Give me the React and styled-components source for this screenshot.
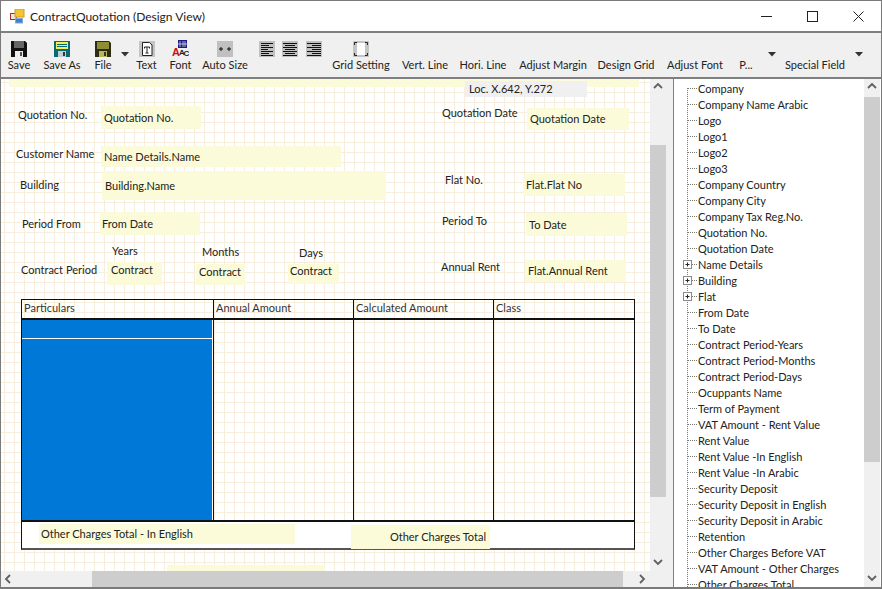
import React from 'react';
import styled, { createGlobalStyle } from 'styled-components';

const Global = createGlobalStyle`
  html, body { margin: 0; padding: 0; background: #fff; }
  body { font-family: Lato, "Open Sans", "Liberation Sans", sans-serif; font-size: 11px; color: #111; overflow: hidden; }
  * { box-sizing: border-box; }
`;

const Window = styled.div`
  width: 882px; height: 589px; display: flex; flex-direction: column;
  border: 1px solid #7a7a7a; border-bottom-width: 2px; overflow: hidden; background: #f0f0f0;
`;
const TitleBar = styled.div`
  height: 30px; flex: none; background: #fff; display: flex; align-items: center; padding-left: 9px;
`;
const Title = styled.span`
  margin-left: 5px; font-size: 12px; color: #222; white-space: nowrap;
`;
const Controls = styled.div`
  margin-left: auto; display: flex; align-items: center; height: 100%;
`;
const ControlBtn = styled.div`
  width: 46px; height: 30px; display: flex; align-items: center; justify-content: center;
`;
const Toolbar = styled.div`
  height: 48px; flex: none; background: #f0f0f0; display: flex; align-items: stretch; padding-left: 3px;
  border-top: 2px solid #7f7f7f; border-bottom: 2px solid #7f7f7f;
`;
const Tool = styled.div`
  width: ${p => p.$w}px; flex: none; display: flex; flex-direction: column; align-items: center;
  padding-top: ${p => p.$drop ? 13 : 7}px; white-space: nowrap;
`;
const ToolIcon = styled.div`
  height: 17px; display: flex; align-items: center; justify-content: center;
`;
const ToolLabel = styled.div`
  font-size: 11px; line-height: 16px; color: #222;
`;
const Body = styled.div`
  flex: 1; display: flex; min-height: 0;
`;
const Design = styled.div`
  width: 665px; flex: none; display: grid; grid-template-columns: 649px 16px; grid-template-rows: 492px 16px;
`;
const Canvas = styled.div`
  position: relative; overflow: hidden; background-color: #fff;
  background-image:
    linear-gradient(to right, #f8eedd 1px, transparent 1px),
    linear-gradient(to bottom, #f8eedd 1px, transparent 1px);
  background-size: 10px 10px;
  background-position: 3px 3px;
`;
const Strip = styled.div`
  position: absolute; background: #fbfbd9;
  left: ${p => p.$x}px; top: ${p => p.$y}px; width: ${p => p.$w}px; height: ${p => p.$h}px;
`;
const Field = styled.div`
  position: absolute; display: flex; align-items: center; background: #fbfbd9; color: #222; white-space: nowrap;
  justify-content: ${p => p.$align || 'flex-start'};
  padding: 0 ${p => p.$pr ?? 3}px ${p => p.$pb ?? 1}px ${p => p.$pl ?? 3}px;
  left: ${p => p.$x}px; top: ${p => p.$y}px; width: ${p => p.$w}px; height: ${p => p.$h}px;
`;
const Loc = styled(Field)`
  background: #f0f0f0;
`;
const Label = styled.div`
  position: absolute; white-space: nowrap; color: #222; line-height: 16px;
  left: ${p => p.$x}px; top: ${p => p.$y}px;
`;
const Table = styled.div`
  position: absolute; left: 20px; top: 220px; width: 614px; display: flex; flex-direction: column;
`;
const HeaderRow = styled.div`
  display: grid; grid-template-columns: 191px 140px 140px 141px; height: 21px;
  border: 1px solid #111; border-bottom-width: 2px;
`;
const HeaderCell = styled.div`
  padding-left: 2px; line-height: 16px; color: #333; border-left: ${p => p.$first ? 'none' : '1px solid #111'};
`;
const BodyRow = styled.div`
  display: grid; grid-template-columns: 191px 140px 140px 141px; height: 200px;
  border-left: 1px solid #111; border-right: 1px solid #111;
`;
const BlueCell = styled.div`
  background: #0078d7; border-right: 1px solid #fff;
`;
const Selected = styled.div`
  height: 19px; border-bottom: 1px solid #fff;
`;
const BodyCell = styled.div`
  border-left: 1px solid #111;
`;
const FooterRow = styled.div`
  height: 30px; background: #fff; border: 1px solid #111; border-top: 2px solid #111; border-bottom: 2px solid #555;
`;
const VBar = styled.div`
  background: #f0f0f0; display: flex; flex-direction: column; align-items: stretch;
`;
const HBar = styled.div`
  background: #f0f0f0; display: flex; align-items: stretch;
`;
const Arrow = styled.div`
  flex: none; width: ${p => p.$w || 'auto'}; height: ${p => p.$h || 'auto'};
  display: flex; align-items: center; justify-content: center;
`;
const Thumb = styled.div`
  background: #cdcdcd; flex: none;
  ${p => p.$vertical
    ? `height: ${p.$len}px; margin-top: ${p.$off}px;`
    : `width: ${p.$len}px; margin-left: ${p.$off}px;`}
`;
const Spring = styled.div` flex: 1; `;
const Corner = styled.div` background: #f0f0f0; `;
const Splitter = styled.div`
  width: 8px; flex: none; background: #f0f0f0; border-right: 1px solid #7f7f7f;
`;
const Tree = styled.div`
  flex: 1; display: flex; background: #fff; min-width: 0; height: 508px; overflow: hidden;
`;
const TreeList = styled.div`
  flex: 1; padding-top: 1px; overflow: hidden;
`;
const TreeRow = styled.div`
  height: 16px; display: flex; align-items: center; white-space: nowrap; color: #222; flex: none;
`;
const TreeVBar = styled(VBar)`
  width: 16px; flex: none; margin-right: 1px;
`;

const Save = () => (
  <svg width="16" height="16" viewBox="0 0 16 16">
    <path d="M0 0h14l2 2v14H0z" fill="#111" />
    <rect x="3" y="0" width="10" height="7" fill="#666" />
    <rect x="4" y="10" width="8" height="6" fill="#eee" />
    <rect x="9" y="11" width="2" height="4" fill="#555" />
  </svg>
);
const SaveAs = () => (
  <svg width="16" height="16" viewBox="0 0 16 16">
    <rect width="16" height="16" fill="#0a6a72" />
    <rect x="2" y="1" width="12" height="7" fill="#f3ee58" />
    <rect x="3" y="3" width="10" height="1" fill="#0a6a72" />
    <rect x="3" y="5" width="10" height="1" fill="#0a6a72" />
    <rect x="4" y="10" width="8" height="6" fill="#c4ccd4" />
    <rect x="9" y="11" width="2" height="4" fill="#334" />
  </svg>
);
const FileIco = () => (
  <svg width="16" height="16" viewBox="0 0 16 16">
    <path d="M0 0h14l2 2v14H0z" fill="#2c2c12" />
    <rect x="2" y="1" width="12" height="7" fill="#8d8d33" />
    <rect x="4" y="10" width="8" height="6" fill="#b8b85a" />
    <rect x="9" y="11" width="2" height="4" fill="#333" />
  </svg>
);
const TextIco = () => (
  <svg width="16" height="16" viewBox="0 0 16 16">
    <rect width="16" height="16" fill="#c4c4c4" />
    <path d="M3.5 1.5h7l2.500 2.500v10.500h-9.500z" fill="#fff" stroke="#222" />
    <path d="M5.500 7.500V6h5v1.500M8 6v6M6.500 12h3" fill="none" stroke="#222" />
  </svg>
);
const FontIco = () => (
  <svg width="17" height="17" viewBox="0 0 17 17" fontFamily="Liberation Sans, sans-serif" fontWeight="700">
    <rect x="6" y="0" width="9" height="8" fill="#1a1a80" />
    <path d="M8 1v6M11 1v6M13 1v6M6 4h9" stroke="#f0f0f0" strokeWidth="0.700" />
    <text x="0" y="16" fontSize="11" fill="#cc1111">A</text>
    <text x="7" y="15" fontSize="8" fill="#222">A</text>
    <text x="11.500" y="16" fontSize="8" fill="#222">C</text>
  </svg>
);
const AutoIco = () => (
  <svg width="16" height="16" viewBox="0 0 16 16">
    <rect width="16" height="16" fill="#c0c0c0" />
    <path d="M2 8h4M4 6v4M10 8h4M12 6v4" stroke="#111" />
  </svg>
);
const AlignIco = ({ kind }) => {
  const lines = kind === 'left'
    ? [[2, 14], [2, 10], [2, 14], [2, 9], [2, 14], [2, 10], [2, 14]]
    : kind === 'center'
      ? [[1, 15], [3, 13], [1, 15], [3, 13], [1, 15], [3, 13], [1, 15]]
      : [[1, 15], [6, 15], [1, 15], [6, 15], [1, 15], [6, 15], [1, 15]];
  return (
    <svg width="16" height="16" viewBox="0 0 16 16">
      <rect width="16" height="16" fill="#c0c0c0" />
      {lines.map(([a, b], i) => <path key={i} d={`M${a} ${2.5 + i * 2}H${b}`} stroke="#111" />)}
    </svg>
  );
};
const GridIco = () => (
  <svg width="16" height="16" viewBox="0 0 16 16">
    <rect width="16" height="16" fill="#c4c4c4" />
    <rect x="4" y="2" width="8" height="12" fill="#fff" />
    <path d="M1.500 4V1.500H4M12 1.500h2.500V4M1.500 12v2.500H4M12 14.500h2.500V12" fill="none" stroke="#222" />
  </svg>
);
const Drop = () => (
  <svg width="8" height="5" viewBox="0 0 8 5"><path d="M0 0h8L4 4.500z" fill="#333" /></svg>
);
const Chevron = ({ dir }) => {
  const d = { up: 'M1 6l4-4 4 4', down: 'M1 2l4 4 4-4', left: 'M6 1L2 5l4 4', right: 'M3 1l4 4-4 4' }[dir];
  return <svg width="10" height="10" viewBox="0 0 10 10"><path d={d} fill="none" stroke="#606060" strokeWidth="1.800" /></svg>;
};
const Connector = ({ plus }) => (
  <svg width="24" height="16" viewBox="0 0 24 16" style={{ flex: 'none' }}>
    <path d={`M13.5 ${plus === 'first' ? 8 : 0}V16`} stroke="#777" strokeDasharray="1 1" />
    <path d="M14 8.500H23" stroke="#777" strokeDasharray="1 1" />
    {plus === true && (
      <>
        <rect x="9.500" y="4.500" width="8" height="8" fill="#fff" stroke="#8a8a8a" />
        <path d="M11.500 8.500h4M13.500 6.500v4" stroke="#222" />
      </>
    )}
  </svg>
);

const tools = [
  { w: 30, label: 'Save', icon: <Save /> },
  { w: 56, label: 'Save As', icon: <SaveAs /> },
  { w: 26, label: 'File', icon: <FileIco /> },
  { w: 17, drop: true },
  { w: 27, label: 'Text', icon: <TextIco /> },
  { w: 41, label: 'Font', icon: <FontIco /> },
  { w: 48, label: 'Auto Size', icon: <AutoIco /> },
  { w: 6 },
  { w: 23, icon: <AlignIco kind="left" /> },
  { w: 23, icon: <AlignIco kind="center" /> },
  { w: 25, icon: <AlignIco kind="right" /> },
  { w: 70, label: 'Grid Setting', icon: <GridIco /> },
  { w: 58, label: 'Vert. Line' },
  { w: 58, label: 'Hori. Line' },
  { w: 82, label: 'Adjust Margin' },
  { w: 64, label: 'Design Grid' },
  { w: 74, label: 'Adjust Font' },
  { w: 28, label: 'P...' },
  { w: 24, drop: true },
  { w: 62, label: 'Special Field' },
  { w: 26, drop: true },
];

const labels = [
  ['Quotation No.', 17, 28], ['Quotation Date', 441, 26], ['Customer Name', 15, 67], ['Building', 19, 98],
  ['Flat No.', 444, 93], ['Period From', 21, 137], ['Period To', 441, 134], ['Years', 111, 164],
  ['Months', 201, 165], ['Days', 298, 166], ['Contract Period', 20, 183], ['Annual Rent', 440, 180],
];

const fields = [
  { t: 'Quotation No.', x: 100, y: 27, w: 100, h: 23 },
  { t: 'Quotation Date', x: 526, y: 29, w: 102, h: 22 },
  { t: 'Name Details.Name', x: 100, y: 67, w: 240, h: 21 },
  { t: 'Building.Name', x: 101, y: 92, w: 284, h: 29 },
  { t: 'Flat.Flat No', x: 522, y: 95, w: 102, h: 22 },
  { t: 'From Date', x: 99, y: 133, w: 100, h: 23, pl: 2 },
  { t: 'To Date', x: 525, y: 134, w: 101, h: 23 },
  { t: 'Contract', x: 106, y: 183, w: 55, h: 23, pl: 4, pb: 9 },
  { t: 'Contract', x: 195, y: 185, w: 49, h: 21, pl: 3, pb: 7 },
  { t: 'Contract', x: 287, y: 185, w: 51, h: 20, pl: 2, pb: 7 },
  { t: 'Flat.Annual Rent', x: 524, y: 181, w: 101, h: 22 },
  { t: 'Other Charges Total - In English', x: 38, y: 445, w: 256, h: 20, pl: 2 },
  { t: 'Other Charges Total', x: 350, y: 446, w: 139, h: 24, align: 'flex-end', pr: 4, pb: 2 },
];

const treeItems = [
  'Company', 'Company Name Arabic', 'Logo', 'Logo1', 'Logo2', 'Logo3', 'Company Country', 'Company City',
  'Company Tax Reg.No.', 'Quotation No.', 'Quotation Date', '+Name Details', '+Building', '+Flat', 'From Date', 'To Date',
  'Contract Period-Years', 'Contract Period-Months', 'Contract Period-Days', 'Ocuppants Name', 'Term of Payment',
  'VAT Amount - Rent Value', 'Rent Value', 'Rent Value -In English', 'Rent Value -In Arabic', 'Security Deposit',
  'Security Deposit in English', 'Security Deposit in Arabic', 'Retention', 'Other Charges Before VAT',
  'VAT Amount - Other Charges', 'Other Charges Total',
];

export default function App() {
  return (
    <>
      <Global />
      <Window>
        <TitleBar>
          <svg width="15" height="15" viewBox="0 0 15 15">
            <rect x="0.500" y="4.500" width="6" height="6" fill="#e8e8e8" stroke="#b02a2a" />
            <rect x="5" y="0" width="9" height="8" fill="#f3c530" stroke="#d59b1f" />
            <rect x="5.500" y="9.500" width="7" height="4.500" fill="#3f7fd0" stroke="#8aa8d8" />
          </svg>
          <Title>ContractQuotation (Design View)</Title>
          <Controls>
            <ControlBtn>
              <svg width="11" height="11" viewBox="0 0 11 11"><path d="M0 5.500h11" stroke="#222" /></svg>
            </ControlBtn>
            <ControlBtn>
              <svg width="11" height="11" viewBox="0 0 11 11"><rect x="0.500" y="0.500" width="10" height="10" fill="none" stroke="#222" /></svg>
            </ControlBtn>
            <ControlBtn>
              <svg width="11" height="11" viewBox="0 0 11 11"><path d="M0.500 0.500l10 10M10.500 0.500l-10 10" stroke="#222" /></svg>
            </ControlBtn>
          </Controls>
        </TitleBar>
        <Toolbar>
          {tools.map((t, i) => (
            <Tool key={i} $w={t.w} $drop={t.drop}>
              <ToolIcon>{t.icon}{t.drop && <Drop />}</ToolIcon>
              {t.label && <ToolLabel>{t.label}</ToolLabel>}
            </Tool>
          ))}
        </Toolbar>
        <Body>
          <Design>
            <Canvas>
              <Strip $x={8} $y={0} $w={630} $h={8} />
              <Strip $x={166} $y={486} $w={158} $h={6} />
              <Loc $x={464} $y={2} $w={122} $h={16} $pl={4}>Loc. X.642, Y.272</Loc>
              {labels.map(([t, x, y]) => <Label key={t} $x={x} $y={y}>{t}</Label>)}
              <Table>
                <HeaderRow>
                  <HeaderCell $first>Particulars</HeaderCell>
                  <HeaderCell>Annual Amount</HeaderCell>
                  <HeaderCell>Calculated Amount</HeaderCell>
                  <HeaderCell>Class</HeaderCell>
                </HeaderRow>
                <BodyRow>
                  <BlueCell><Selected /></BlueCell>
                  <BodyCell />
                  <BodyCell />
                  <BodyCell />
                </BodyRow>
                <FooterRow />
              </Table>
              {fields.map((f, i) => (
                <Field key={i} $x={f.x} $y={f.y} $w={f.w} $h={f.h} $pl={f.pl} $pr={f.pr} $pb={f.pb} $align={f.align}>{f.t}</Field>
              ))}
            </Canvas>
            <VBar>
              <Arrow $h="16px"><Chevron dir="up" /></Arrow>
              <Thumb $vertical $off={50} $len={352} />
              <Spring />
              <Arrow $h="16px"><Chevron dir="down" /></Arrow>
            </VBar>
            <HBar>
              <Arrow $w="16px"><Chevron dir="left" /></Arrow>
              <Thumb $off={75} $len={531} />
              <Spring />
              <Arrow $w="16px"><Chevron dir="right" /></Arrow>
            </HBar>
            <Corner />
          </Design>
          <Splitter />
          <Tree>
            <TreeList>
              {treeItems.map((item, i) => {
                const plus = item.startsWith('+');
                return (
                  <TreeRow key={item}>
                    <Connector plus={plus ? true : i === 0 ? 'first' : false} />
                    {plus ? item.slice(1) : item}
                  </TreeRow>
                );
              })}
            </TreeList>
            <TreeVBar>
              <Arrow $h="16px"><Chevron dir="up" /></Arrow>
              <Thumb $vertical $off={2} $len={365} />
              <Spring />
              <Arrow $h="16px"><Chevron dir="down" /></Arrow>
            </TreeVBar>
          </Tree>
        </Body>
      </Window>
    </>
  );
}
